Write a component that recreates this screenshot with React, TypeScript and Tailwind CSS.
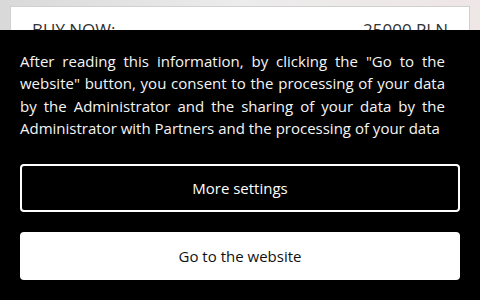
import React from "react";

export default function App() {
  return (
    <div className="relative w-[480px] h-[300px] overflow-hidden bg-gradient-to-r from-[#d9d9d9] via-[#ececec] to-[#efe6e6]" style={{ fontFamily: '"Open Sans", sans-serif' }}>
      <div className="mx-[10px] mt-[6px] h-[60px] bg-white border border-[#d0d0d0] flex justify-between px-[21px] pt-[10px] text-[17px] text-[#333]">
        <span>BUY NOW:</span>
        <span>25000 PLN</span>
      </div>
      <div className="absolute left-0 right-0 top-[30px] bottom-0 bg-black px-[20px] pt-[20px] flex flex-col">
        <p className="w-[425px] text-[15px] leading-[22.3px] text-[#f5f5f5] text-justify">
          After reading this information, by clicking the "Go to the website" button, you consent to the processing of your data by the Administrator and the sharing of your data by the Administrator with Partners and the processing of your data
        </p>
        <button className="mt-[25px] h-[48px] w-full rounded-[4px] border-2 border-white text-white text-[15px] flex items-center justify-center">
          More settings
        </button>
        <button className="mt-[20px] h-[48px] w-full rounded-[4px] bg-white text-[#111] text-[15px] flex items-center justify-center">
          Go to the website
        </button>
      </div>
    </div>
  );
}
